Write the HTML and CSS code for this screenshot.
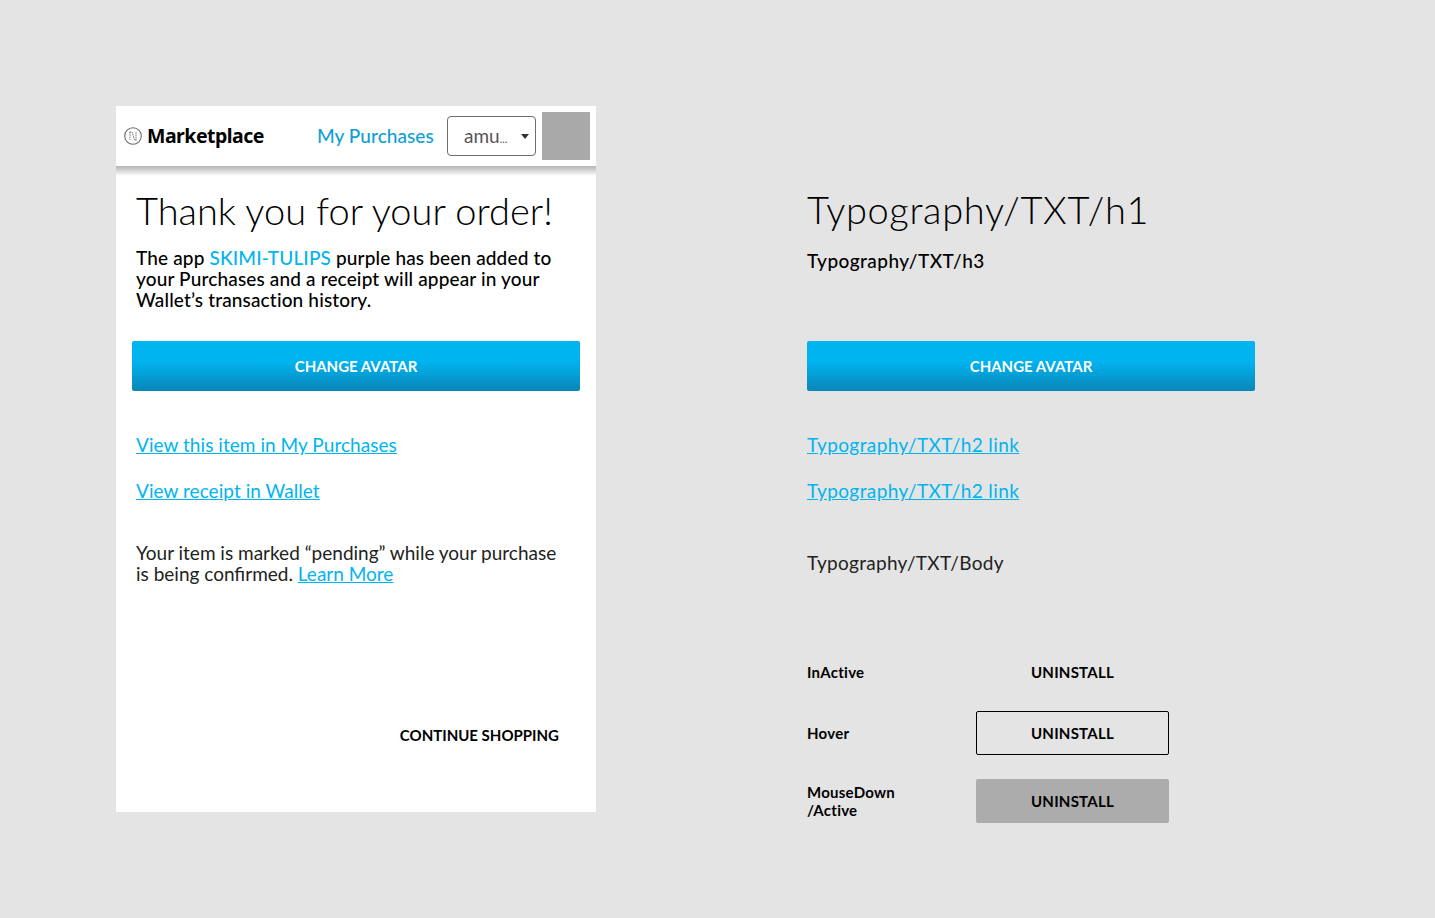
FILE: index.html
```html
<!DOCTYPE html>
<html lang="en">
<head>
    <meta charset="UTF-8">
    <title>Purchase Confirmation</title>
    <link rel="stylesheet" href="styles.css">
</head>
<body>
    <div class="page">
        <div class="card">
            <div class="header">
                <div class="brand">
                    <svg class="logo" viewBox="0 0 18 18" width="18" height="18">
                        <circle cx="9" cy="9" r="8.3" fill="none" stroke="#6b6b6b" stroke-width="1.1"/>
                        <path d="M6 5v8M12 5v8M5.5 5H8l2.5 8H12.5" fill="none" stroke="#7a7a7a" stroke-width="1" stroke-dasharray="1.6 .7"/>
                    </svg>
                    <span>Marketplace</span>
                </div>
                <a class="header-link">My Purchases</a>
                <div class="user-select">
                    <span>amu<small class="dots">...</small></span>
                    <i class="caret"></i>
                </div>
                <div class="avatar"></div>
            </div>
            <div class="header-shadow"></div>
            <div class="content">
                <h1>Thank you for your order!</h1>
                <p class="lead">The app <span class="accent">SKIMI-TULIPS</span> purple has been added to your Purchases and a receipt will appear in your Wallet&rsquo;s transaction history.</p>
                <button class="primary">CHANGE AVATAR</button>
                <div class="links">
                    <a href="#">View this item in My Purchases</a>
                    <a href="#">View receipt in Wallet</a>
                </div>
                <p class="body-text">Your item is marked &ldquo;pending&rdquo; while your purchase is being confirmed. <a href="#">Learn More</a></p>
                <div class="continue">CONTINUE SHOPPING</div>
            </div>
        </div>

        <div class="spec">
            <h1>Typography/TXT/h1</h1>
            <p class="spec-h3">Typography/TXT/h3</p>
            <button class="primary">CHANGE AVATAR</button>
            <div class="links">
                <a href="#">Typography/TXT/h2 link</a>
                <a href="#">Typography/TXT/h2 link</a>
            </div>
            <p class="spec-body">Typography/TXT/Body</p>
            <div class="states">
                <div class="state-row">
                    <div class="state-label">InActive</div>
                    <div class="state-btn">UNINSTALL</div>
                </div>
                <div class="state-row">
                    <div class="state-label">Hover</div>
                    <div class="state-btn hover">UNINSTALL</div>
                </div>
                <div class="state-row last">
                    <div class="state-label">MouseDown<br>/Active</div>
                    <div class="state-btn active">UNINSTALL</div>
                </div>
            </div>
        </div>
    </div>
</body>
</html>
```

FILE: styles.css
```css
:root {
    --bg-page: #e4e4e4;
    --accent: #00b4f0;
    --accent-dark: #0d9fd6;
    --text: #000000;
    --grey: #acacac;
}

* {
    box-sizing: border-box;
}

body {
    margin: 0;
    background-color: var(--bg-page);
    color: var(--text);
    font-family: "Lato", "Open Sans", sans-serif;
}

.page {
    display: flex;
    align-items: flex-start;
    padding: 106px 0 0 116px;
    height: 918px;
    overflow: hidden;
}

.card {
    width: 480px;
    height: 706px;
    background-color: #ffffff;
}

.header {
    display: flex;
    align-items: center;
    height: 60px;
    padding: 0 6px 0 8px;
}

.header-shadow {
    height: 10px;
    background: linear-gradient(#b4b4b4, #ffffff);
}

.brand {
    display: flex;
    align-items: center;
    gap: 5px;
    width: 193px;
    font-family: "Noto Sans", sans-serif;
    font-size: 19.5px;
    font-weight: 700;
    letter-spacing: -0.5px;
    line-height: 24px;
}

.brand span {
    margin-top: -1px;
}

.header-link {
    width: 130px;
    margin-top: -2px;
    color: var(--accent-dark);
    font-size: 19px;
    font-weight: 500;
    letter-spacing: 0.05px;
}

.user-select {
    display: flex;
    align-items: center;
    justify-content: space-between;
    width: 89px;
    height: 40px;
    padding: 0 6px 2px 16px;
    border: 1px solid #6e6e6e;
    border-radius: 4px;
    color: #555555;
    font-size: 19px;
}

.dots {
    font-size: 11px;
}

.caret {
    width: 0;
    height: 0;
    margin-top: 2px;
    border-left: 4.5px solid transparent;
    border-right: 4.5px solid transparent;
    border-top: 5px solid #333333;
}

.avatar {
    width: 48px;
    height: 48px;
    margin-left: 6px;
    background-color: #a9a9a9;
}

.content {
    padding: 0 16px;
}

h1 {
    margin: 0;
    font-size: 38px;
    font-weight: 300;
    line-height: 50px;
}

.content h1 {
    padding-left: 4px;
    margin-top: 9px;
}

.lead {
    margin: 12px 0 0;
    padding: 0 20px 0 4px;
    font-size: 19px;
    font-weight: 500;
    line-height: 21px;
    letter-spacing: 0.15px;
}

.accent {
    color: var(--accent);
}

.primary {
    display: block;
    width: 448px;
    height: 50px;
    margin-top: 31px;
    border: none;
    border-radius: 2px;
    background: linear-gradient(#00b4f0 0%, #00b4f0 40%, #0a86b8 100%);
    color: #ffffff;
    font-family: inherit;
    font-size: 15px;
    font-weight: 700;
}

.links {
    display: flex;
    flex-direction: column;
    align-items: flex-start;
    gap: 22px;
    margin-top: 42px;
    font-size: 19px;
    line-height: 24px;
    letter-spacing: 0.05px;
}

.content .links {
    padding-left: 4px;
}

.links a,
.body-text a {
    color: var(--accent);
}

.body-text {
    margin: 39px 0 0;
    padding: 0 20px 0 4px;
    color: #222222;
    font-size: 19px;
    font-weight: 400;
    line-height: 21px;
}

.continue {
    margin-top: 142px;
    padding-right: 21px;
    text-align: right;
    font-size: 15px;
    font-weight: 700;
}

.spec {
    width: 448px;
    margin-left: 211px;
}

.spec h1 {
    margin-top: 78px;
    letter-spacing: 0.65px;
}

.spec-h3 {
    margin: 16px 0 0;
    font-size: 19px;
    font-weight: 500;
    line-height: 21px;
    letter-spacing: 0.45px;
}

.spec .primary {
    margin-top: 70px;
}

.spec .links {
    letter-spacing: 0.4px;
}

.spec-body {
    margin: 49px 0 0;
    color: #222222;
    font-size: 19px;
    font-weight: 400;
    line-height: 21px;
    letter-spacing: 0.3px;
}

.states {
    margin-top: 77px;
    font-size: 15px;
    font-weight: 700;
}

.state-row {
    display: flex;
    align-items: center;
    margin-top: 17px;
}

.state-row.last {
    margin-top: 24px;
}

.state-label {
    width: 169px;
    line-height: 18px;
    letter-spacing: 0.25px;
}

.state-btn {
    display: flex;
    align-items: center;
    justify-content: center;
    width: 193px;
    height: 44px;
    border-radius: 2px;
    letter-spacing: 0.25px;
}

.state-btn.hover {
    border: 1px solid #000000;
}

.state-btn.active {
    background-color: var(--grey);
}
```
